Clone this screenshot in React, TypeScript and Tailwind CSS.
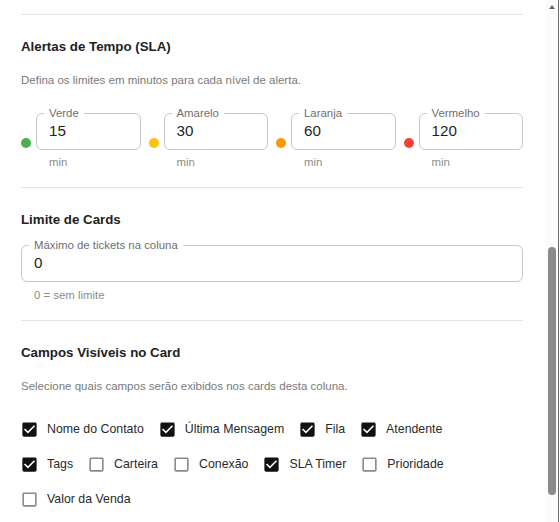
import React from 'react';

type Field = { label: string; checked: boolean };

const slaLevels = [
  { label: 'Verde', value: '15', dot: 'bg-[#4caf50]' },
  { label: 'Amarelo', value: '30', dot: 'bg-[#ffc107]' },
  { label: 'Laranja', value: '60', dot: 'bg-[#ff9800]' },
  { label: 'Vermelho', value: '120', dot: 'bg-[#f44336]' },
];

const fields: Field[] = [
  { label: 'Nome do Contato', checked: true },
  { label: 'Última Mensagem', checked: true },
  { label: 'Fila', checked: true },
  { label: 'Atendente', checked: true },
  { label: 'Tags', checked: true },
  { label: 'Carteira', checked: false },
  { label: 'Conexão', checked: false },
  { label: 'SLA Timer', checked: true },
  { label: 'Prioridade', checked: false },
  { label: 'Valor da Venda', checked: false },
];

function CheckIcon({ checked }: { checked: boolean }) {
  return (
    <svg viewBox="0 0 24 24" className="w-[19px] h-[19px] shrink-0">
      {checked ? (
        <path
          fill="#111111"
          d="M19 3H5c-1.11 0-2 .9-2 2v14c0 1.1.89 2 2 2h14c1.11 0 2-.9 2-2V5c0-1.1-.89-2-2-2zm-9 14l-5-5 1.41-1.41L10 14.17l7.59-7.59L19 8l-9 9z"
        />
      ) : (
        <path
          fill="#8a8a8a"
          d="M19 5v14H5V5h14m0-2H5c-1.1 0-2 .9-2 2v14c0 1.1.9 2 2 2h14c1.1 0 2-.9 2-2V5c0-1.1-.9-2-2-2z"
        />
      )}
    </svg>
  );
}

function OutlinedField({ label, value }: { label: string; value: string }) {
  return (
    <fieldset className="border border-[#c8c8c8] rounded-[6px] min-w-0">
      <legend className="ml-[7px] px-[5px] text-[11.4px] leading-[12px] text-[#6e6e6e]">{label}</legend>
      <div className="pl-[12px] pt-[2px] pb-[9px] text-[15.2px] leading-[19px] text-[#1f1f1f]">{value}</div>
    </fieldset>
  );
}

function SectionTitle({ children }: { children: React.ReactNode }) {
  return <h3 className="text-[13.3px] leading-5 font-bold text-[#222222]">{children}</h3>;
}

export default function App() {
  return (
    <div className="w-[560px] h-[522px] flex bg-white overflow-hidden font-['Liberation_Sans',Arial,sans-serif]">
      <div className="flex-1 pl-[21px] pr-[23px] pt-[14px]">
        <div className="h-px bg-[#e4e4e4]" />

        {/* SLA */}
        <section className="pt-[22px] pb-[15px]">
          <SectionTitle>Alertas de Tempo (SLA)</SectionTitle>
          <p className="mt-[15px] text-[11.5px] leading-4 text-[#7a7a7a]">
            Defina os limites em minutos para cada nível de alerta.
          </p>
          <div className="mt-[19px] grid grid-cols-4 gap-x-2">
            {slaLevels.map((l) => (
              <div key={l.label} className="flex items-center gap-[5px]">
                <span className={`w-[10px] h-[10px] rounded-full shrink-0 mt-[6px] ${l.dot}`} />
                <div className="flex-1 min-w-0">
                  <OutlinedField label={l.label} value={l.value} />
                  <div className="mt-[2px] pl-[13px] text-[11.4px] leading-5 text-[#8c8c8c]">min</div>
                </div>
              </div>
            ))}
          </div>
        </section>

        <div className="h-px bg-[#e4e4e4]" />

        {/* Card limit */}
        <section className="pt-[22px] pb-[15px]">
          <SectionTitle>Limite de Cards</SectionTitle>
          <div className="mt-[9px]">
            <OutlinedField label="Máximo de tickets na coluna" value="0" />
            <div className="mt-[3px] pl-[13px] text-[11.4px] leading-5 text-[#8c8c8c]">0 = sem limite</div>
          </div>
        </section>

        <div className="h-px bg-[#e4e4e4]" />

        {/* Visible fields */}
        <section className="pt-[22px]">
          <SectionTitle>Campos Visíveis no Card</SectionTitle>
          <p className="mt-[15px] text-[11.5px] leading-4 text-[#7a7a7a]">
            Selecione quais campos serão exibidos nos cards desta coluna.
          </p>
          <div className="mt-[25px] -ml-px flex flex-wrap gap-y-[15px]">
            {fields.map((f) => (
              <label key={f.label} className="h-5 mr-[14px] flex items-center gap-[8px]">
                <CheckIcon checked={f.checked} />
                <span className="text-[12.35px] text-[#2a2a2a]">{f.label}</span>
              </label>
            ))}
          </div>
        </section>
      </div>

      {/* scrollbar */}
      <div className="w-[12px] bg-[#fbfbfb] flex flex-col items-center pt-[5px]">
        <div className="w-0 h-0 border-l-[3.5px] border-r-[3.5px] border-b-[4px] border-l-transparent border-r-transparent border-b-[#666666]" />
        <div className="mt-[238px] w-[8px] h-[248px] rounded-full bg-[#8b8b8b]" />
      </div>
      <div className="w-px bg-[#6a6a6a]" />
      <div className="w-px bg-white" />
    </div>
  );
}
